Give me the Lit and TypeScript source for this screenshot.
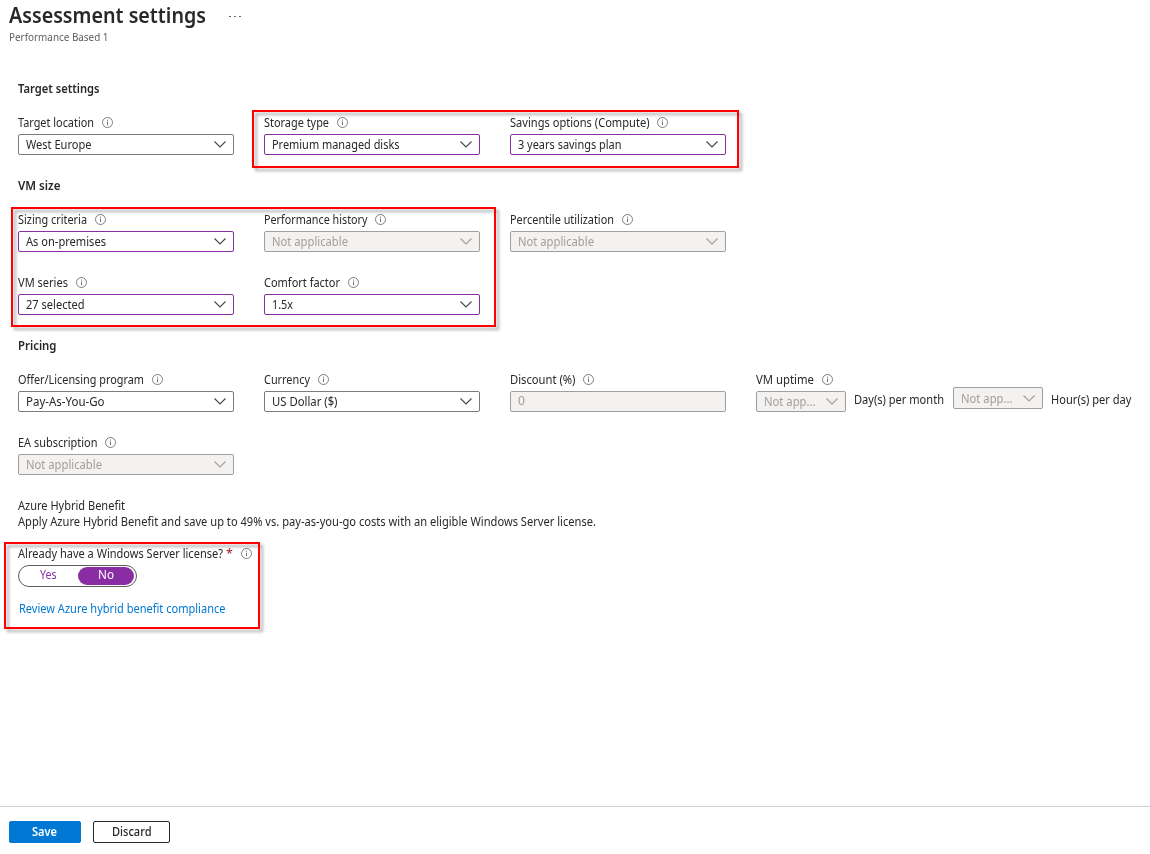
import { LitElement, html, css, svg } from "lit";
import { customElement, property } from "lit/decorators.js";

/** Text run condensed or widened horizontally so that it spans a given width. */
@customElement("fit-text")
class FitText extends LitElement {
  @property() text = "";
  @property({ type: Number }) span = 0;
  static styles = css`
    :host { display: inline-block; white-space: pre; text-align: left; }
    .run { display: inline-block; transform-origin: 0 50%; }
  `;
  render() {
    return html`<span class="run">${this.text}</span>`;
  }
  updated() {
    const run = this.renderRoot.querySelector(".run") as HTMLElement;
    const natural = run.offsetWidth ? run.getBoundingClientRect().width : 0;
    if (this.span && natural) {
      this.style.width = `${this.span}px`;
      run.style.transform = `scaleX(${this.span / natural})`;
    }
  }
}

const fit = (text: string, span: number) =>
  html`<fit-text .text=${text} .span=${span}></fit-text>`;

const infoIcon = html`<svg class="info" width="11" height="11" viewBox="0 0 11 11">
  ${svg`<circle cx="5.5" cy="5.5" r="5" fill="none" stroke="#6b6966" stroke-width="0.85"/>
  <path d="M5.5 4.6V8.2M5.5 2.7V3.7" fill="none" stroke="#6b6966" stroke-width="0.95"/>`}
</svg>`;

const chevron = html`<svg class="chevron" width="12" height="7" viewBox="0 0 12 7">
  <path d="M0.5 0.5L6 6L11.5 0.5" fill="none" stroke="currentColor" stroke-width="1.1"/>
</svg>`;

type Kind = "" | "edited" | "disabled";

const select = (value: string, span: number, kind: Kind, extra = "") =>
  html`<div class="select ${kind} ${extra}">${fit(value, span)}${chevron}</div>`;

const label = (text: string, span: number) =>
  html`<div class="label">${fit(text, span)}${infoIcon}</div>`;

const field = (name: string, nameSpan: number, value: string, span: number, kind: Kind = "") =>
  html`<div class="field">${label(name, nameSpan)}${select(value, span, kind)}</div>`;

@customElement("app-root")
class AppRoot extends LitElement {
  static styles = css`
    :host {
      display: flex; flex-direction: column; position: relative;
      width: 1150px; height: 854px; overflow: hidden; background: #fff;
      font-family: "Noto Sans", "Open Sans", sans-serif;
      font-size: 12.4px; line-height: 16px; color: #292827;
    }
    * { box-sizing: border-box; }
    header { height: 81px; padding: 1px 0 0 9px; }
    .title-row { display: flex; align-items: center; gap: 23px; height: 29px; }
    h1 { margin: 0; font-size: 21.2px; line-height: 27px; font-weight: 600; height: 29px; }
    .more { display: flex; gap: 3px; padding-top: 2px; }
    .more i { width: 2px; height: 1px; background: #666; }
    .subtitle { font-size: 10.8px; line-height: 14px; color: #605e5c; }
    main { flex: 1; padding-left: 18px; }
    h2 { margin: 0 0 18px; font-size: 12.4px; line-height: 16px; font-weight: 600; }
    .grid { display: grid; grid-template-columns: 216px 216px 216px max-content; gap: 23px 30px; margin-bottom: 23px; }
    .field { display: flex; flex-direction: column; gap: 3px; }
    .label { display: flex; align-items: center; gap: 7.5px; height: 16px; }
    .info { display: block; margin-bottom: 1px; }
    .select {
      display: flex; align-items: center; justify-content: space-between;
      height: 21px; padding: 0 7px 0 7px; border: 1px solid #7d7b79; border-radius: 2px;
      background: #fff; line-height: 19px; color: #292827;
    }
    .chevron { color: #484644; }
    .edited { border-color: #8a2da5; }
    .disabled { border-color: #a19f9d; background: #f3f2f1; color: #a19f9d; }
    .disabled .chevron { color: #a19f9d; }
    .number { padding-bottom: 2px; }
    .short { width: 90px; }
    .tall { height: 22px; margin-bottom: 3px; }
    .uptime { display: flex; align-items: flex-end; height: 21px; }
    .unit { padding: 0 9px 4px 8px; }
    .unit.last { padding-right: 0; }
    .question { display: flex; align-items: center; height: 16px; margin: 16px 0 3px; }
    .star { color: #a4262c; margin: 0 8.5px 0 3px; }
    .toggle { display: flex; width: 119px; height: 22px; padding: 1px 2px 2px 0; border: 1px solid #605e5c; border-radius: 11px; line-height: 16px; color: #8a2da5; }
    .option { width: 59px; text-align: center; }
    .option.on { width: 56px; height: 18px; border-radius: 9px; background: #8a2da5; color: #fff; }
    .link { margin: 14px 0 0 1px; color: #0078d4; }
    footer { display: flex; gap: 12px; height: 48px; padding: 14px 0 0 9px; border-top: 1px solid #d2d0ce; }
    .button { display: flex; justify-content: center; height: 22px; line-height: 20px; border: 1px solid #292827; border-radius: 2px; font-weight: 500; }
    .save { width: 72px; padding-right: 1px; color: #fff; background: #0078d4; border-color: #0078d4; font-weight: 600; }
    .discard { width: 77px; }
    .callout { position: absolute; border: 2px solid #f00; filter: drop-shadow(3px 3px 1.5px rgba(0, 0, 0, 0.33)); pointer-events: none; }
    .storage { left: 252px; top: 110px; width: 487px; height: 58px; }
    .sizing { left: 11px; top: 207px; width: 485px; height: 120px; }
    .license { left: 4px; top: 542px; width: 256px; height: 87px; }
  `;

  render() {
    return html`
      <header>
        <div class="title-row">
          <h1>${fit("Assessment settings", 197)}</h1>
          <span class="more"><i></i><i></i><i></i></span>
        </div>
        <div class="subtitle">${fit("Performance Based 1", 99.5)}</div>
      </header>
      <main>
        <h2>${fit("Target settings", 81.5)}</h2>
        <div class="grid">
          ${field("Target location", 76, "West Europe", 65.5)}
          ${field("Storage type", 65, "Premium managed disks", 127.5, "edited")}
          ${field("Savings options (Compute)", 139.5, "3 years savings plan", 103.5, "edited")}
        </div>
        <h2>${fit("VM size", 42.5)}</h2>
        <div class="grid">
          ${field("Sizing criteria", 69, "As on-premises", 80, "edited")}
          ${field("Performance history", 103.5, "Not applicable", 76, "disabled")}
          ${field("Percentile utilization", 104, "Not applicable", 76, "disabled")}
        </div>
        <div class="grid">
          ${field("VM series", 50, "27 selected", 58.5, "edited")}
          ${field("Comfort factor", 76, "1.5x", 21, "edited")}
        </div>
        <h2>${fit("Pricing", 38.5)}</h2>
        <div class="grid">
          ${field("Offer/Licensing program", 126, "Pay-As-You-Go", 78.5)}
          ${field("Currency", 46, "US Dollar ($)", 65.5)}
          <div class="field">
            ${label("Discount (%)", 65.5)}
            <div class="select disabled number">${fit("0", 7)}</div>
          </div>
          <div class="field">
            ${label("VM uptime", 58)}
            <div class="uptime">
              ${select("Not app...", 51.5, "disabled", "short")}
              <span class="unit">${fit("Day(s) per month", 90)}</span>
              ${select("Not app...", 51.5, "disabled", "short tall")}
              <span class="unit last">${fit("Hour(s) per day", 80.5)}</span>
            </div>
          </div>
          ${field("EA subscription", 79.5, "Not applicable", 76, "disabled")}
        </div>
        <div>${fit("Azure Hybrid Benefit", 107)}</div>
        <div>${fit("Apply Azure Hybrid Benefit and save up to 49% vs. pay-as-you-go costs with an eligible Windows Server license.", 578)}</div>
        <div class="question">
          ${fit("Already have a Windows Server license?", 205)}<span class="star">*</span>${infoIcon}
        </div>
        <div class="toggle">
          <span class="option">${fit("Yes", 16.5)}</span>
          <span class="option on">${fit("No", 16)}</span>
        </div>
        <div class="link">${fit("Review Azure hybrid benefit compliance", 206.5)}</div>
      </main>
      <footer>
        <div class="button save">${fit("Save", 25)}</div>
        <div class="button discard">${fit("Discard", 39.5)}</div>
      </footer>
      <div class="callout storage"></div>
      <div class="callout sizing"></div>
      <div class="callout license"></div>
    `;
  }
}
